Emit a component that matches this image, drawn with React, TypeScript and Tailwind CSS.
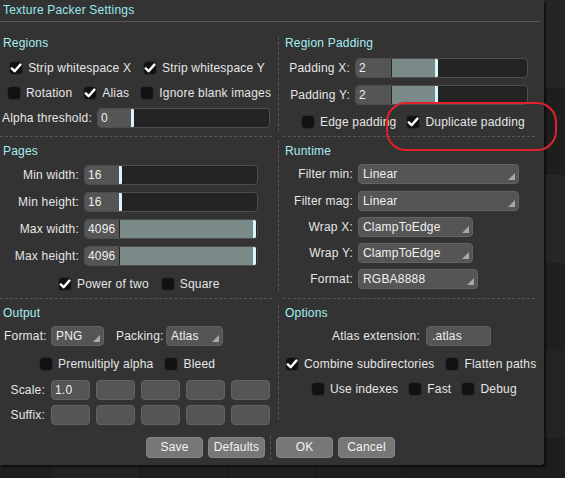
import React from "react";

function Check({ checked, label }: { checked?: boolean; label: string }) {
  return (
    <div className="flex items-center h-[16px]">
      <div className="w-[14px] h-[14px] rounded-[4px] bg-[#111111] border border-[#2c2c2c] flex items-center justify-center shrink-0">
        {checked && (
          <svg width="12" height="12" viewBox="0 0 12 12">
            <path d="M1.8 6.4 L4.6 9.2 L10.4 2.6" fill="none" stroke="#ffffff" strokeWidth="2.4" strokeLinecap="round" strokeLinejoin="round" />
          </svg>
        )}
      </div>
      <span className="ml-[5px] whitespace-nowrap">{label}</span>
    </div>
  );
}

function Slider({ text, lead, fill, width }: { text: string; lead: number; fill: number; width: number }) {
  return (
    <div className="h-[20px] rounded-[4px] border border-[#4e4e4e] bg-[#232323] flex overflow-hidden" style={{ width }}>
      <div className="h-full bg-[#555555] pl-[3px] leading-[18px] text-[#f0f0f0] shrink-0" style={{ width: lead }}>
        {text}
      </div>
      {fill > 0 && <div className="h-full bg-[#7a8a88] border-l border-[#262626] shrink-0" style={{ width: fill }} />}
      <div className="h-full w-[3px] bg-[#d6f6fc] rounded-r-[1px] shrink-0" />
    </div>
  );
}

function Select({ value, w }: { value: string; w: string }) {
  return (
    <div className={`relative h-[20px] rounded-[4px] border border-[#626262] bg-[#555555] pl-[4px] leading-[18px] text-[#f0f0f0] ${w}`}>
      {value}
      <svg className="absolute right-[3px] bottom-[3px]" width="7" height="7" viewBox="0 0 7 7">
        <path d="M7 0 L7 7 L0 7 Z" fill="#a8a8a8" />
      </svg>
    </div>
  );
}

function Box({ value }: { value?: string }) {
  return (
    <div className="w-[39px] h-[20px] rounded-[4px] border border-[#626262] bg-[#555555] pl-[3px] leading-[18px] text-[#f0f0f0]">
      {value}
    </div>
  );
}

function Header({ children }: { children: React.ReactNode }) {
  return <div className="h-[16px] leading-[16px] text-[#a6eef2]">{children}</div>;
}

function Button({ label }: { label: string }) {
  return (
    <div className="w-[57px] h-[21px] rounded-[4px] border border-[#858585] bg-[#777777] text-center leading-[19px] text-[#f4f4f4]">
      {label}
    </div>
  );
}

export default function App() {
  return (
    <div className="relative w-[565px] h-[478px] overflow-hidden bg-[#1e1e1e] font-['Liberation_Sans',Arial,sans-serif] text-[12px] tracking-[0.2px] text-[#e6e6e6]">
      {/* background behind the dialog */}
      <div className="flex flex-col w-full h-full">
        <div className="h-[88px] bg-[#252525]" />
        <div className="h-[87px] bg-[#1e1e1e]" />
        <div className="h-[88px] bg-[#262626]" />
        <div className="h-[87px] bg-[#1f1f1f]" />
        <div className="h-[88px] bg-[#232323]" />
        <div className="flex-1 flex bg-[#1d1d1d]">
          <div className="w-[53px] bg-[#1e1e1e]" />
          <div className="w-[88px] bg-[#222222] border-r border-[#171717]" />
          <div className="w-[87px] bg-[#1f1f1f] border-r border-[#171717]" />
          <div className="w-[88px] bg-[#202020] border-r border-[#171717]" />
          <div className="w-[87px] bg-[#1e1e1e] border-r border-[#171717]" />
          <div className="flex-1 bg-[#1d1d1d]" />
        </div>
      </div>

      {/* dialog */}
      <div className="absolute left-0 top-0 w-[544px] h-[465px] bg-[#333333] rounded-br-[3px] shadow-[2px_2px_2px_rgba(0,0,0,0.55)] flex flex-col">
        <div className="h-[22px] mr-[4px] border-b border-[#575757] pl-[3px] leading-[20px] text-[#9ae8ee]">
          Texture Packer Settings
        </div>

        <div className="grid grid-cols-[278px_1px_265px] grid-rows-[115px_162px_131px]">
          {/* Regions */}
          <div className="mr-[6px] border-b border-dashed border-[#575757] pt-[13px] flex flex-col">
            <div className="pl-[3px]"><Header>Regions</Header></div>
            <div className="mt-[9px] flex justify-center gap-[12px] pl-[2px]">
              <Check checked label="Strip whitespace X" />
              <Check checked label="Strip whitespace Y" />
            </div>
            <div className="mt-[9px] flex gap-[11px] pl-[7px]">
              <Check label="Rotation" />
              <Check checked label="Alias" />
              <Check label="Ignore blank images" />
            </div>
            <div className="mt-[7px] flex items-center pl-[2px] gap-[6px]">
              <span className="w-[89px] whitespace-nowrap">Alpha threshold:</span>
              <Slider text="0" lead={33} fill={0} width={173} />
            </div>
          </div>
          <div className="mt-[15px] mb-[6px] border-l border-dashed border-[#575757]" />
          <div className="ml-[4px] mr-[9px] border-b border-dashed border-[#575757] pt-[13px] flex flex-col">
            <div className="pl-[2px]"><Header>Region Padding</Header></div>
            <div className="mt-[7px] flex items-center">
              <span className="w-[67px] text-right">Padding X:</span>
              <div className="ml-[5px]"><Slider text="2" lead={35} fill={44} width={173} /></div>
            </div>
            <div className="mt-[7px] flex items-center">
              <span className="w-[67px] text-right">Padding Y:</span>
              <div className="ml-[5px]"><Slider text="2" lead={35} fill={44} width={173} /></div>
            </div>
            <div className="mt-[9px] flex gap-[10px] pl-[18px]">
              <Check label="Edge padding" />
              <Check checked label="Duplicate padding" />
            </div>
          </div>

          {/* Pages */}
          <div className="mr-[6px] border-b border-dashed border-[#575757] pt-[6px] flex flex-col">
            <div className="pl-[3px]"><Header>Pages</Header></div>
            {[
              { l: "Min width:", v: "16", f: 0, mt: "mt-[6px]" },
              { l: "Min height:", v: "16", f: 0, mt: "mt-[7px]" },
              { l: "Max width:", v: "4096", f: 134, mt: "mt-[7px]" },
              { l: "Max height:", v: "4096", f: 134, mt: "mt-[7px]" },
            ].map((r) => (
              <div key={r.l} className={`${r.mt} flex items-center`}>
                <span className="w-[79px] text-right whitespace-nowrap">{r.l}</span>
                <div className="ml-[5px]"><Slider text={r.v} lead={34} fill={r.f} width={174} /></div>
              </div>
            ))}
            <div className="mt-[10px] flex gap-[12px] pl-[58px]">
              <Check checked label="Power of two" />
              <Check label="Square" />
            </div>
          </div>
          <div className="mt-[3px] mb-[8px] border-l border-dashed border-[#575757]" />
          <div className="ml-[4px] mr-[9px] border-b border-dashed border-[#575757] pt-[6px] flex flex-col">
            <div className="pl-[2px]"><Header>Runtime</Header></div>
            {[
              { l: "Filter min:", v: "Linear", w: "w-[161px]", mt: "mt-[5px]" },
              { l: "Filter mag:", v: "Linear", w: "w-[161px]", mt: "mt-[7px]" },
              { l: "Wrap X:", v: "ClampToEdge", w: "w-[115px]", mt: "mt-[6px]" },
              { l: "Wrap Y:", v: "ClampToEdge", w: "w-[115px]", mt: "mt-[6px]" },
              { l: "Format:", v: "RGBA8888", w: "w-[120px]", mt: "mt-[6px]" },
            ].map((r) => (
              <div key={r.l} className={`${r.mt} flex items-center`}>
                <span className="w-[70px] text-right whitespace-nowrap">{r.l}</span>
                <div className="ml-[5px]"><Select value={r.v} w={r.w} /></div>
              </div>
            ))}
          </div>

          {/* Output */}
          <div className="mr-[6px] pt-[6px] flex flex-col">
            <div className="pl-[3px]"><Header>Output</Header></div>
            <div className="mt-[5px] flex items-center pl-[4px]">
              <span className="w-[42px] whitespace-nowrap">Format:</span>
              <div className="ml-[5px]"><Select value="PNG" w="w-[53px]" /></div>
              <span className="ml-[12px] w-[45px] whitespace-nowrap">Packing:</span>
              <div className="ml-[5px]"><Select value="Atlas" w="w-[57px]" /></div>
            </div>
            <div className="mt-[10px] flex gap-[11px] pl-[39px]">
              <Check label="Premultiply alpha" />
              <Check label="Bleed" />
            </div>
            <div className="mt-[8px] flex items-center">
              <span className="w-[45px] text-right">Scale:</span>
              <div className="ml-[6px] flex gap-[6px]">
                <Box value="1.0" />
                <Box />
                <Box />
                <Box />
                <Box />
              </div>
            </div>
            <div className="mt-[5px] flex items-center">
              <span className="w-[45px] text-right">Suffix:</span>
              <div className="ml-[6px] flex gap-[6px]">
                <Box />
                <Box />
                <Box />
                <Box />
                <Box />
              </div>
            </div>
          </div>
          <div className="mt-[6px] mb-[10px] border-l border-dashed border-[#575757]" />
          <div className="ml-[4px] mr-[9px] pt-[6px] flex flex-col">
            <div className="pl-[2px]"><Header>Options</Header></div>
            <div className="mt-[5px] flex items-center pl-[49px]">
              <span className="w-[89px] whitespace-nowrap">Atlas extension:</span>
              <div className="ml-[5px] w-[65px] h-[20px] rounded-[4px] border border-[#626262] bg-[#555555] pl-[5px] leading-[18px] text-[#f0f0f0]">
                .atlas
              </div>
            </div>
            <div className="mt-[10px] flex gap-[11px] pl-[2px]">
              <Check checked label="Combine subdirectories" />
              <Check label="Flatten paths" />
            </div>
            <div className="mt-[9px] flex gap-[10px] pl-[28px]">
              <Check label="Use indexes" />
              <Check label="Fast" />
              <Check label="Debug" />
            </div>
          </div>
        </div>

        <div className="mt-[7px] flex items-center pl-[146px] h-[21px]">
          <Button label="Save" />
          <div className="ml-[5px]"><Button label="Defaults" /></div>
          <div className="mx-[5px] h-[24px] border-l border-dashed border-[#575757]" />
          <Button label="OK" />
          <div className="ml-[5px]"><Button label="Cancel" /></div>
        </div>
      </div>

      {/* red highlight annotation */}
      <div className="absolute left-[386px] top-[102px] w-[171px] h-[49px] rounded-[20px] border-2 border-[#e0222c]" />
    </div>
  );
}
